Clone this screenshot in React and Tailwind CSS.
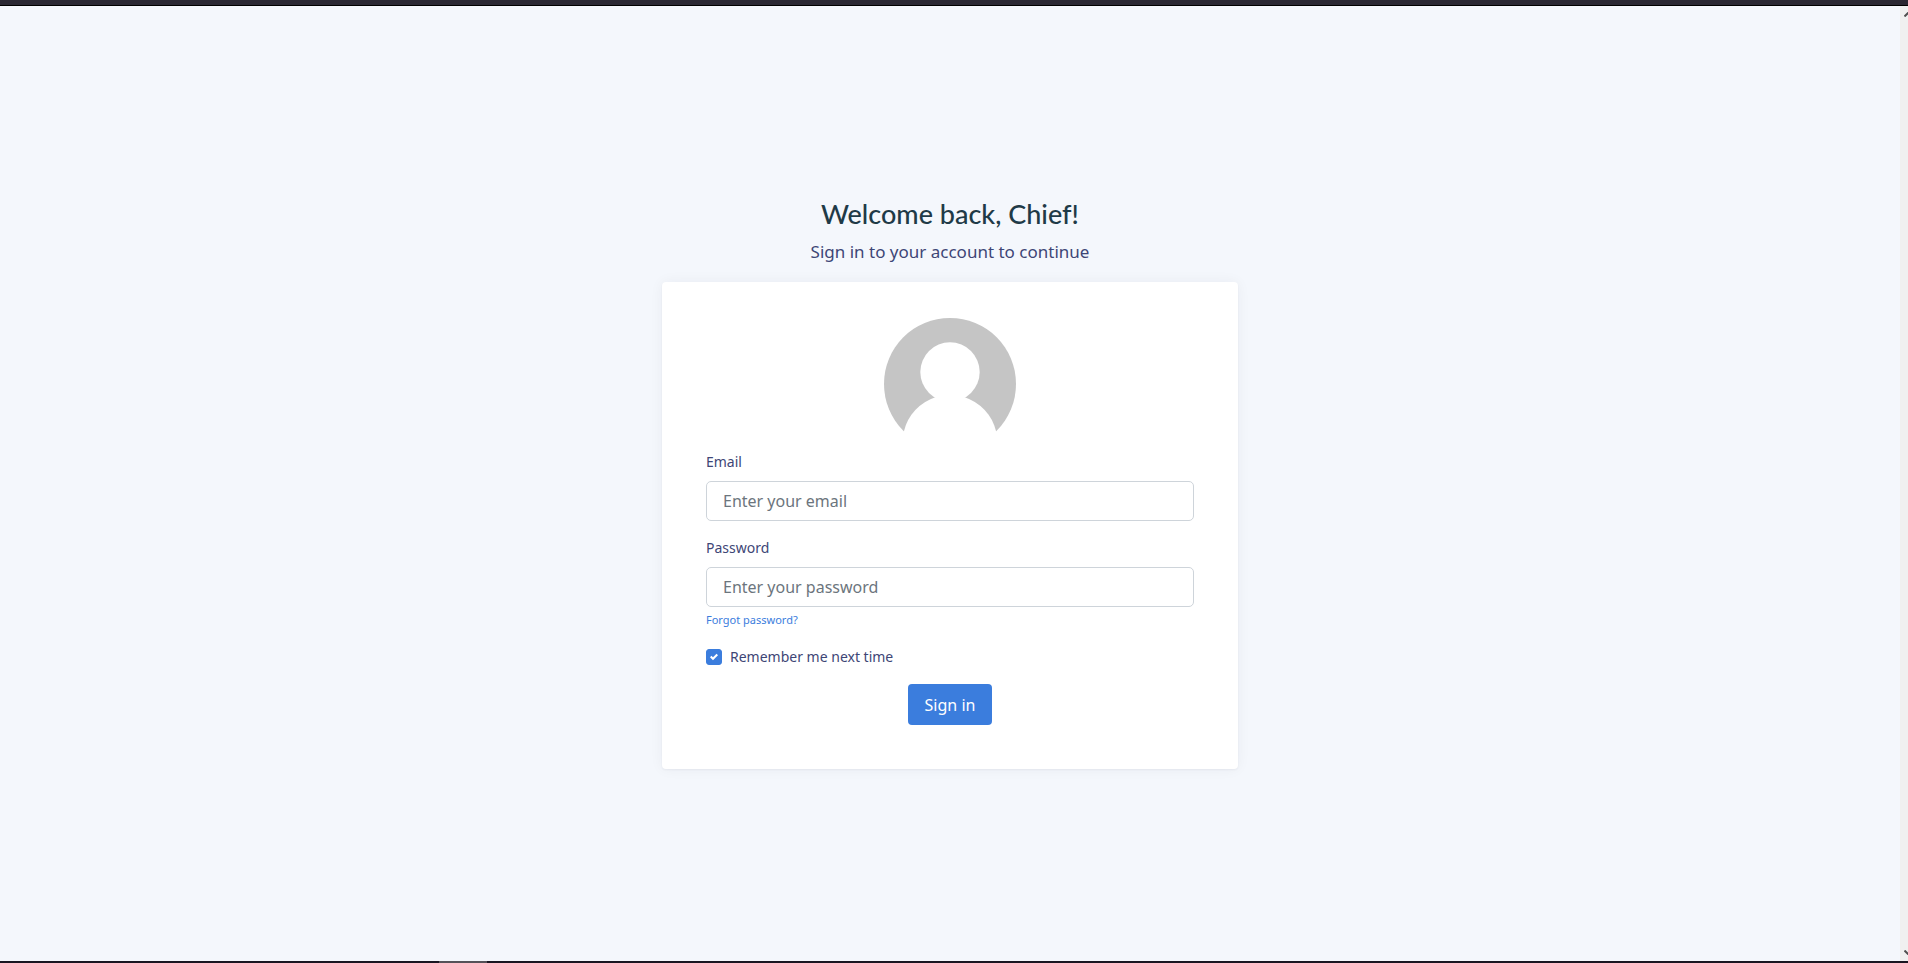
const inputClass =
  "block h-10 w-full rounded-[5px] border border-[#ced4da] bg-white px-4 text-base text-[#495057] placeholder:text-[#6c757d] placeholder:opacity-100 outline-none focus:border-[#3b7ddd]";
const labelClass = "mb-2 block text-sm leading-[23px]";

function Avatar() {
  return (
    <svg
      className="mx-auto block size-[132px]"
      viewBox="0 0 132 132"
      role="img"
      aria-label="Avatar"
    >
      <circle cx="66" cy="66" r="66" fill="#c5c5c5" />
      <circle cx="66" cy="54" r="29.7" fill="#fff" />
      <path d="M51.4 79.3A47.4 47.4 0 0 0 20 113V132H112V113A47.4 47.4 0 0 0 80.6 79.3Z" fill="#fff" />
    </svg>
  );
}

function Scrollbar() {
  return (
    <div className="flex w-2 shrink-0 flex-col justify-between overflow-hidden bg-[#f0f0f0] pt-1.5 pb-1.5" aria-hidden="true">
      <svg className="ml-1 h-[5px] w-2" viewBox="0 0 8 5">
        <path d="M0.5 4.5L4 1L7.5 4.5" fill="none" stroke="#505050" strokeWidth="2" />
      </svg>
      <svg className="ml-1 h-[5px] w-2" viewBox="0 0 8 5">
        <path d="M0.5 0.5L4 4L7.5 0.5" fill="none" stroke="#505050" strokeWidth="2" />
      </svg>
    </div>
  );
}

export default function App() {
  return (
    <div className="flex min-h-screen flex-col bg-[#f4f7fc] font-['Noto_Sans',sans-serif] text-[#3e4676]">
      <div className="h-1.5 border-b border-black bg-[#2b2833]" />
      <div className="flex flex-1">
        <main className="flex flex-1 items-center justify-center">
          <div className="w-full max-w-[576px] py-6">
            <header className="mb-4 text-center">
              <h1 className="mb-2 font-['Lato',sans-serif] text-[27px] leading-8 font-medium text-[#1f3a47]">
                Welcome back, Chief!
              </h1>
              <p className="text-[17px] leading-7">Sign in to your account to continue</p>
            </header>
            <section className="rounded bg-white px-11 pt-9 pb-11 shadow-[0_0_14px_rgba(41,48,66,0.05),0_1px_2px_rgba(41,48,66,0.05)]">
              <Avatar />
              <form className="flex flex-col gap-[15px]" onSubmit={(e) => e.preventDefault()}>
                <div>
                  <label htmlFor="email" className={labelClass}>
                    Email
                  </label>
                  <input id="email" type="email" placeholder="Enter your email" className={inputClass} />
                </div>
                <div>
                  <label htmlFor="password" className={labelClass}>
                    Password
                  </label>
                  <input id="password" type="password" placeholder="Enter your password" className={inputClass} />
                  <a href="#forgot" className="mt-[3px] block w-fit text-[11px] leading-5 text-[#3b7ddd]">
                    Forgot password?
                  </a>
                </div>
                <label className="flex w-fit items-center gap-2 text-sm leading-6">
                  <span className="grid size-4 place-items-center">
                    <input
                      type="checkbox"
                      defaultChecked
                      className="peer col-start-1 row-start-1 size-4 appearance-none rounded-[3px] border border-[#adb5bd] bg-white checked:border-[#3b7ddd] checked:bg-[#3b7ddd]"
                    />
                    <svg
                      className="pointer-events-none invisible col-start-1 row-start-1 size-2 peer-checked:visible"
                      viewBox="0 0 8 8"
                      aria-hidden="true"
                    >
                      <path fill="#fff" d="M6.564.75l-3.59 3.612-1.538-1.55L0 4.26 2.974 7.25 8 2.193z" />
                    </svg>
                  </span>
                  Remember me next time
                </label>
                <button
                  type="submit"
                  className="h-[41px] self-center rounded bg-[#3b7ddd] px-[17px] text-base text-white"
                >
                  Sign in
                </button>
              </form>
            </section>
          </div>
        </main>
        <Scrollbar />
      </div>
      <div className="flex h-0.5 bg-[#191521]">
        <div className="ml-[23%] w-12 bg-[#555158]" />
      </div>
    </div>
  );
}
